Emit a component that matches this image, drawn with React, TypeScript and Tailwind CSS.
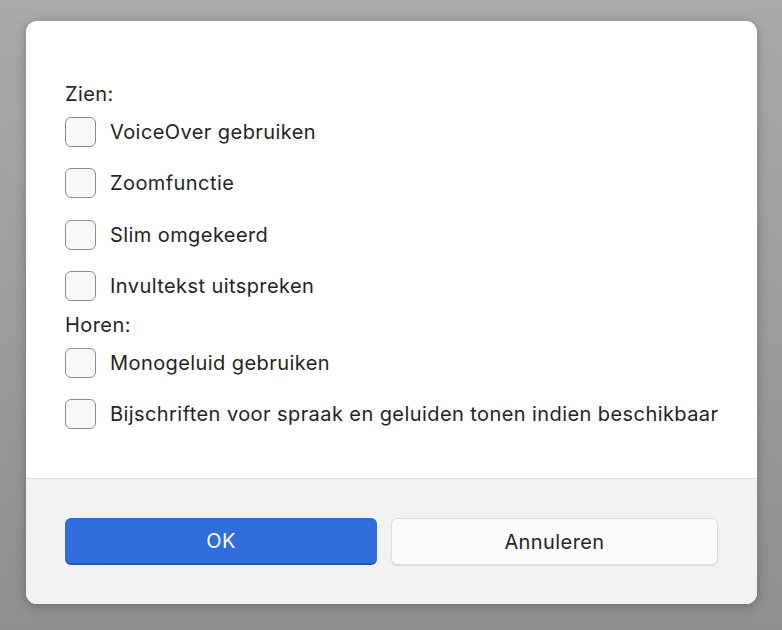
import React from 'react';

const seeItems = ['VoiceOver gebruiken', 'Zoomfunctie', 'Slim omgekeerd', 'Invultekst uitspreken'];
const hearItems = ['Monogeluid gebruiken', 'Bijschriften voor spraak en geluiden tonen indien beschikbaar'];

const Row = ({ label, first }: { label: string; first?: boolean }) => (
  <label className={`flex items-center h-[30px] ${first ? 'mt-[8px]' : 'mt-[21.3px]'}`}>
    <span className="w-[31px] h-[30px] rounded-[6px] border border-[#8e8e8e] bg-[#f9f9f9] shrink-0" />
    <span className="ml-[14px] text-[20px] text-[#242424] whitespace-nowrap">{label}</span>
  </label>
);

export default function App() {
  return (
    <div
      className="h-[630px] w-full bg-gradient-to-b from-[#aaaaaa] to-[#8f8f8f] pt-[21px] pl-[26px] tracking-[0.42px]"
      style={{ fontFamily: 'Inter, "Liberation Sans", Arial, sans-serif' }}
    >
      <div className="w-[731px] h-[583px] bg-white rounded-[11px] shadow-[0_2px_12px_rgba(0,0,0,0.25)] overflow-hidden flex flex-col">
        <div className="flex-1 pt-[58px] px-[39px]">
          <div className="h-[30px] leading-[30px] text-[20px] text-[#242424]">Zien:</div>
          {seeItems.map((t, i) => (
            <Row key={t} label={t} first={i === 0} />
          ))}
          <div className="h-[30px] leading-[30px] mt-[9px] text-[20px] text-[#242424]">Horen:</div>
          <Row label={hearItems[0]} first />
          <Row label={hearItems[1]} />
        </div>
        <div className="h-[126px] bg-[#f2f2f2] border-t border-[#e2e2e2] px-[39px] pt-[39px] flex gap-[14px] shrink-0">
          <button className="w-[312px] h-[47px] rounded-[6px] bg-[#2e6ddb] border-b-2 border-[#2357b4] text-white text-[20px]">
            OK
          </button>
          <button className="flex-1 h-[47px] rounded-[6px] bg-[#fbfbfb] border border-[#dcdcdc] shadow-[0_1px_1px_rgba(0,0,0,0.08)] text-[#242424] text-[20px]">
            Annuleren
          </button>
        </div>
      </div>
    </div>
  );
}
